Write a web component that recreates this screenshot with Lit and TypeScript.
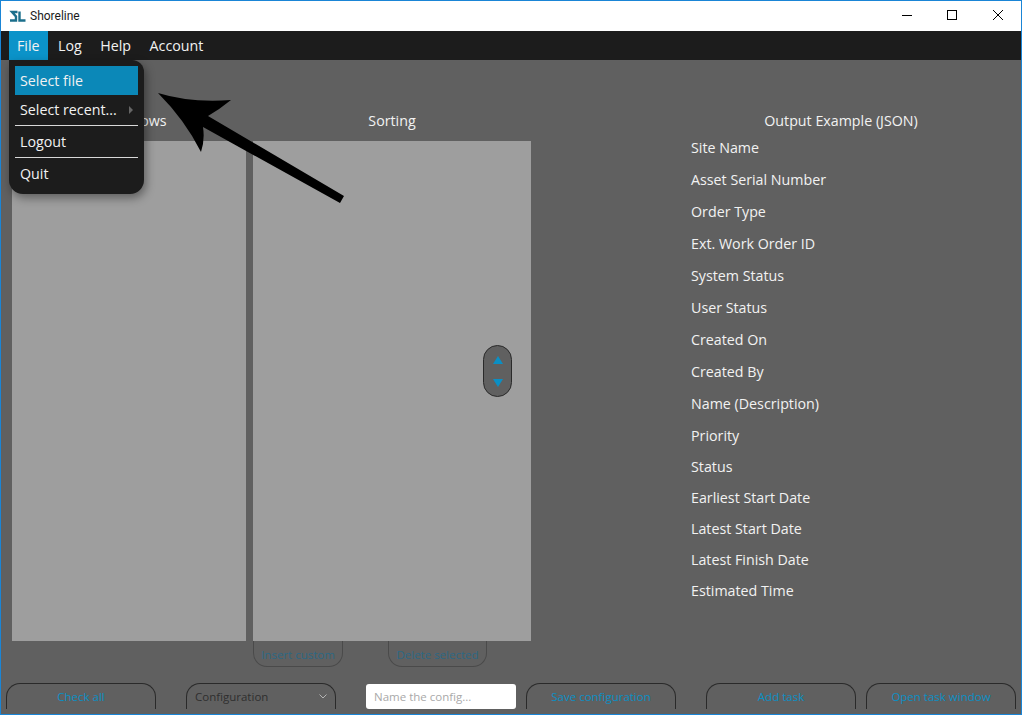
import {customElement} from "lit/decorators.js";
import {css, html, LitElement, svg} from "lit";

const FIELDS = [
    "Site Name",
    "Asset Serial Number",
    "Order Type",
    "Ext. Work Order ID",
    "System Status",
    "User Status",
    "Created On",
    "Created By",
    "Name (Description)",
];

const FIELDS_TIGHT = [
    "Priority",
    "Status",
    "Earliest Start Date",
    "Latest Start Date",
    "Latest Finish Date",
    "Estimated Time",
];

const logo = svg`
    <path d="M17.500 11H12L16 15.500V19.500H10" fill="none" stroke="#1b6f8c" stroke-width="2.400"/>
    <path d="M19.500 10.500V19.500H25.500" fill="none" stroke="#1b6f8c" stroke-width="2.400"/>
`;

@customElement("app-root")
export class AppRoot extends LitElement {
    protected override render() {
        return html`
            <div class="titlebar">
                <svg class="logo" width="30" height="30" viewBox="0 0 30 30">${logo}</svg>
                <span class="title">Shoreline</span>
                <div class="controls">
                    <svg width="119" height="30" viewBox="0 0 119 30" shape-rendering="crispEdges">
                        <path d="M0 14.500H10" stroke="#000" fill="none"/>
                        <rect x="45.500" y="9.500" width="9" height="9" stroke="#000" fill="none"/>
                        <path d="M91 9L101 19M101 9L91 19" stroke="#000" fill="none" shape-rendering="auto"/>
                    </svg>
                </div>
            </div>
            <div class="menubar">
                <span class="menu-item active">File</span>
                <span class="menu-item">Log</span>
                <span class="menu-item">Help</span>
                <span class="menu-item">Account</span>
            </div>
            <div class="main">
                <div class="work">
                    <div class="col col-left">
                        <div class="heading">Select rows</div>
                        <div class="list"></div>
                    </div>
                    <div class="col col-sort">
                        <div class="heading">Sorting</div>
                        <div class="list">
                            <div class="mover">
                                <span class="tri up"></span>
                                <span class="tri down"></span>
                            </div>
                        </div>
                        <div class="list-actions">
                            <button class="tab insert">Insert custom</button>
                            <button class="tab delete">Delete selected</button>
                        </div>
                    </div>
                    <div class="col col-output">
                        <div class="heading">Output Example (JSON)</div>
                        <div class="fields">
                            ${FIELDS.map((f) => html`<div class="field">${f}</div>`)}
                            ${FIELDS_TIGHT.map((f) => html`<div class="field tight">${f}</div>`)}
                        </div>
                    </div>
                </div>
                <div class="footer">
                    <button class="btn">Check all</button>
                    <div class="btn select">
                        <span>Configuration</span>
                        <svg width="8" height="5" viewBox="0 0 8 5"><path d="M0.500 0.500L4 4L7.500 0.500" fill="none" stroke="#b4b4b4"/></svg>
                    </div>
                    <input class="name" placeholder="Name the config..." />
                    <button class="btn">Save configuration</button>
                    <button class="btn near">Add task</button>
                    <button class="btn">Open task window</button>
                </div>

                <div class="popup">
                    <div class="popup-item selected">Select file</div>
                    <div class="popup-item">Select recent...<span class="caret"></span></div>
                    <div class="sep"></div>
                    <div class="popup-item">Logout</div>
                    <div class="sep"></div>
                    <div class="popup-item">Quit</div>
                </div>

                <svg class="arrow" width="200" height="120" viewBox="150 85 200 120">
                    <path d="M158 93Q190 103 231 100Q220 109 208 116L344 196L340 203L203 127Q205 140 201 152Q185 120 158 93Z" fill="#000"/>
                </svg>
            </div>
        `;
    }

    static override styles = css`
        :host {
            display: flex;
            flex-direction: column;
            box-sizing: border-box;
            width: 1022px;
            height: 715px;
            border: 1px solid #1a85d6;
            font-family: "Open Sans", "Noto Sans", sans-serif;
            font-size: 14.250px;
            color: #f2f2f2;
            overflow: hidden;
            background: #606060;
        }
        .titlebar {
            display: flex;
            align-items: center;
            height: 30px;
            flex: none;
            background: #fff;
            color: #1a1a1a;
            font-family: Roboto, "Open Sans", sans-serif;
            font-size: 12px;
        }
        .logo {
            flex: none;
            margin-left: -1px;
        }
        .controls {
            margin-left: auto;
            height: 30px;
        }
        .menubar {
            display: flex;
            height: 29px;
            flex: none;
            padding-left: 8px;
            background: #1c1c1c;
        }
        .menu-item {
            display: flex;
            align-items: center;
            padding: 0 8.500px 0 9px;
            margin-right: 1px;
        }
        .menu-item.active {
            box-sizing: border-box;
            width: 39px;
            padding: 0 0 0 8px;
            background: #0b93c9;
        }
        .main {
            position: relative;
            flex: 1;
            display: flex;
            flex-direction: column;
            min-height: 0;
            background: #606060;
        }
        .work {
            flex: none;
            display: flex;
            height: 623px;
            padding-left: 11px;
        }
        .col {
            display: flex;
            flex-direction: column;
        }
        .col-left {
            width: 234px;
        }
        .col-sort {
            width: 278px;
            margin-left: 7px;
        }
        .col-output {
            width: 300px;
            margin-left: 160px;
        }
        .heading {
            height: 30px;
            margin-top: 51px;
            text-align: center;
            line-height: 20px;
        }
        .list {
            position: relative;
            height: 500px;
            flex: none;
            background: #9e9e9e;
        }
        .mover {
            position: absolute;
            right: 19px;
            top: 204px;
            display: flex;
            flex-direction: column;
            align-items: center;
            justify-content: space-between;
            box-sizing: border-box;
            width: 29px;
            height: 52px;
            padding: 10px 0 9px;
            border: 1px solid #2a2a2a;
            border-radius: 15px;
            background: #606060;
        }
        .tri {
            width: 0;
            height: 0;
            border-left: 5px solid transparent;
            border-right: 5px solid transparent;
        }
        .tri.up {
            border-bottom: 8px solid #0b8fc4;
        }
        .tri.down {
            border-top: 8px solid #0b8fc4;
        }
        .list-actions {
            display: flex;
            gap: 45px;
        }
        button {
            font: inherit;
            padding: 0;
            background: transparent;
        }
        .tab {
            box-sizing: border-box;
            height: 26px;
            padding-top: 2px;
            border: 1px solid #4a4a4a;
            border-top: none;
            border-radius: 0 0 14px 14px;
            color: #2c6884;
            font-size: 11.500px;
        }
        .tab.insert {
            width: 90px;
        }
        .tab.delete {
            width: 99px;
        }
        .fields {
            display: flex;
            flex-direction: column;
        }
        .field {
            height: 32px;
            line-height: 14px;
        }
        .field.tight {
            height: 31px;
        }
        .footer {
            display: flex;
            align-items: flex-start;
            padding-left: 5px;
        }
        .btn {
            box-sizing: border-box;
            flex: none;
            width: 150px;
            height: 26px;
            margin-right: 30px;
            border: 1px solid #2a2a2a;
            border-bottom: none;
            border-radius: 14px 14px 0 0;
            color: #0b8fc4;
            font-size: 11.500px;
        }
        .btn.near {
            margin-right: 10px;
        }
        .select {
            display: flex;
            align-items: center;
            justify-content: space-between;
            padding: 0 8px;
            color: #2f2f2f;
        }
        .name {
            box-sizing: border-box;
            flex: none;
            width: 150px;
            height: 25px;
            margin: 1px 10px 0 0;
            padding: 0 8px;
            border: none;
            border-radius: 3px;
            background: #fff;
            font: inherit;
            font-size: 11.500px;
        }
        .name::placeholder {
            color: #a9a9a9;
        }
        .popup {
            position: absolute;
            left: 8px;
            top: 0;
            box-sizing: border-box;
            width: 135px;
            height: 134px;
            padding: 6px 6px 0;
            border-radius: 0 12px 14px 14px;
            background: #1c1c1c;
            box-shadow: 2px 4px 10px rgba(0, 0, 0, 0.4);
        }
        .popup-item {
            position: relative;
            display: flex;
            align-items: center;
            height: 29px;
            padding-left: 5px;
        }
        .popup-item.selected {
            background: #0b88b8;
        }
        .caret {
            position: absolute;
            right: 5px;
            top: 11px;
            width: 0;
            height: 0;
            border-top: 4px solid transparent;
            border-bottom: 4px solid transparent;
            border-left: 4px solid #666;
        }
        .sep {
            height: 1px;
            margin: 1px 0;
            background: #d8d8d8;
        }
        .arrow {
            position: absolute;
            left: 149px;
            top: 25px;
            pointer-events: none;
        }
    `;
}

declare global {
    interface HTMLElementTagNameMap {
        "app-root": AppRoot;
    }
}
